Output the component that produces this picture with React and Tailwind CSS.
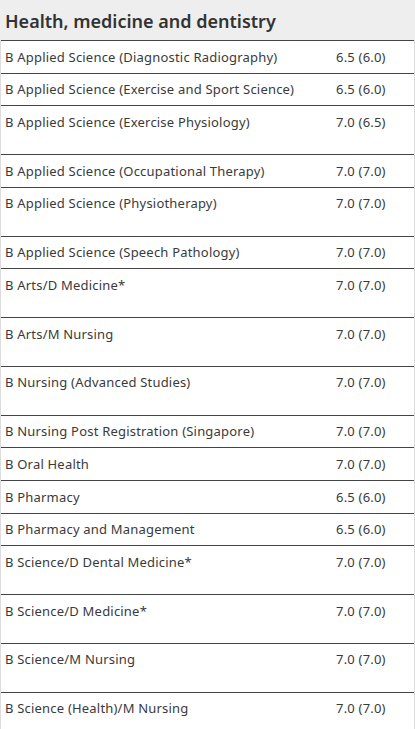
import React from 'react';

const rows = [
  { name: 'B Applied Science (Diagnostic Radiography)', score: '6.5 (6.0)' },
  { name: 'B Applied Science (Exercise and Sport Science)', score: '6.5 (6.0)' },
  { name: 'B Applied Science (Exercise Physiology)', score: '7.0 (6.5)', tall: true },
  { name: 'B Applied Science (Occupational Therapy)', score: '7.0 (7.0)' },
  { name: 'B Applied Science (Physiotherapy)', score: '7.0 (7.0)', tall: true },
  { name: 'B Applied Science (Speech Pathology)', score: '7.0 (7.0)' },
  { name: 'B Arts/D Medicine*', score: '7.0 (7.0)', tall: true },
  { name: 'B Arts/M Nursing', score: '7.0 (7.0)', tall: true },
  { name: 'B Nursing (Advanced Studies)', score: '7.0 (7.0)', tall: true },
  { name: 'B Nursing Post Registration (Singapore)', score: '7.0 (7.0)' },
  { name: 'B Oral Health', score: '7.0 (7.0)' },
  { name: 'B Pharmacy', score: '6.5 (6.0)' },
  { name: 'B Pharmacy and Management', score: '6.5 (6.0)' },
  { name: 'B Science/D Dental Medicine*', score: '7.0 (7.0)', tall: true },
  { name: 'B Science/D Medicine*', score: '7.0 (7.0)', tall: true },
  { name: 'B Science/M Nursing', score: '7.0 (7.0)', tall: true },
  { name: 'B Science (Health)/M Nursing', score: '7.0 (7.0)', tall: true },
];

export default function App() {
  return (
    <div className="w-[415px] h-[729px] overflow-hidden bg-white text-[#3a3a3a] font-['Noto_Sans',sans-serif]">
      <div className="h-[40px] bg-[#eeeeee] flex items-center px-[5px] pt-[2px]">
        <h2 className="text-[18px] font-semibold leading-none text-[#333]">
          Health, medicine and dentistry
        </h2>
      </div>
      <div className="border-x border-[#ddd]">
        {rows.map((r) => (
          <div
            key={r.name}
            className={`grid grid-cols-[330px_1fr] border-t border-[#444] text-[13px] leading-[16px] tracking-[0.2px] ${r.tall ? 'h-[48.9px]' : 'h-[32.6px]'}`}
          >
            <div className="pl-[4px] pt-[7.5px] whitespace-nowrap">{r.name}</div>
            <div className="pl-[5px] pt-[7.5px]">{r.score}</div>
          </div>
        ))}
      </div>
    </div>
  );
}
